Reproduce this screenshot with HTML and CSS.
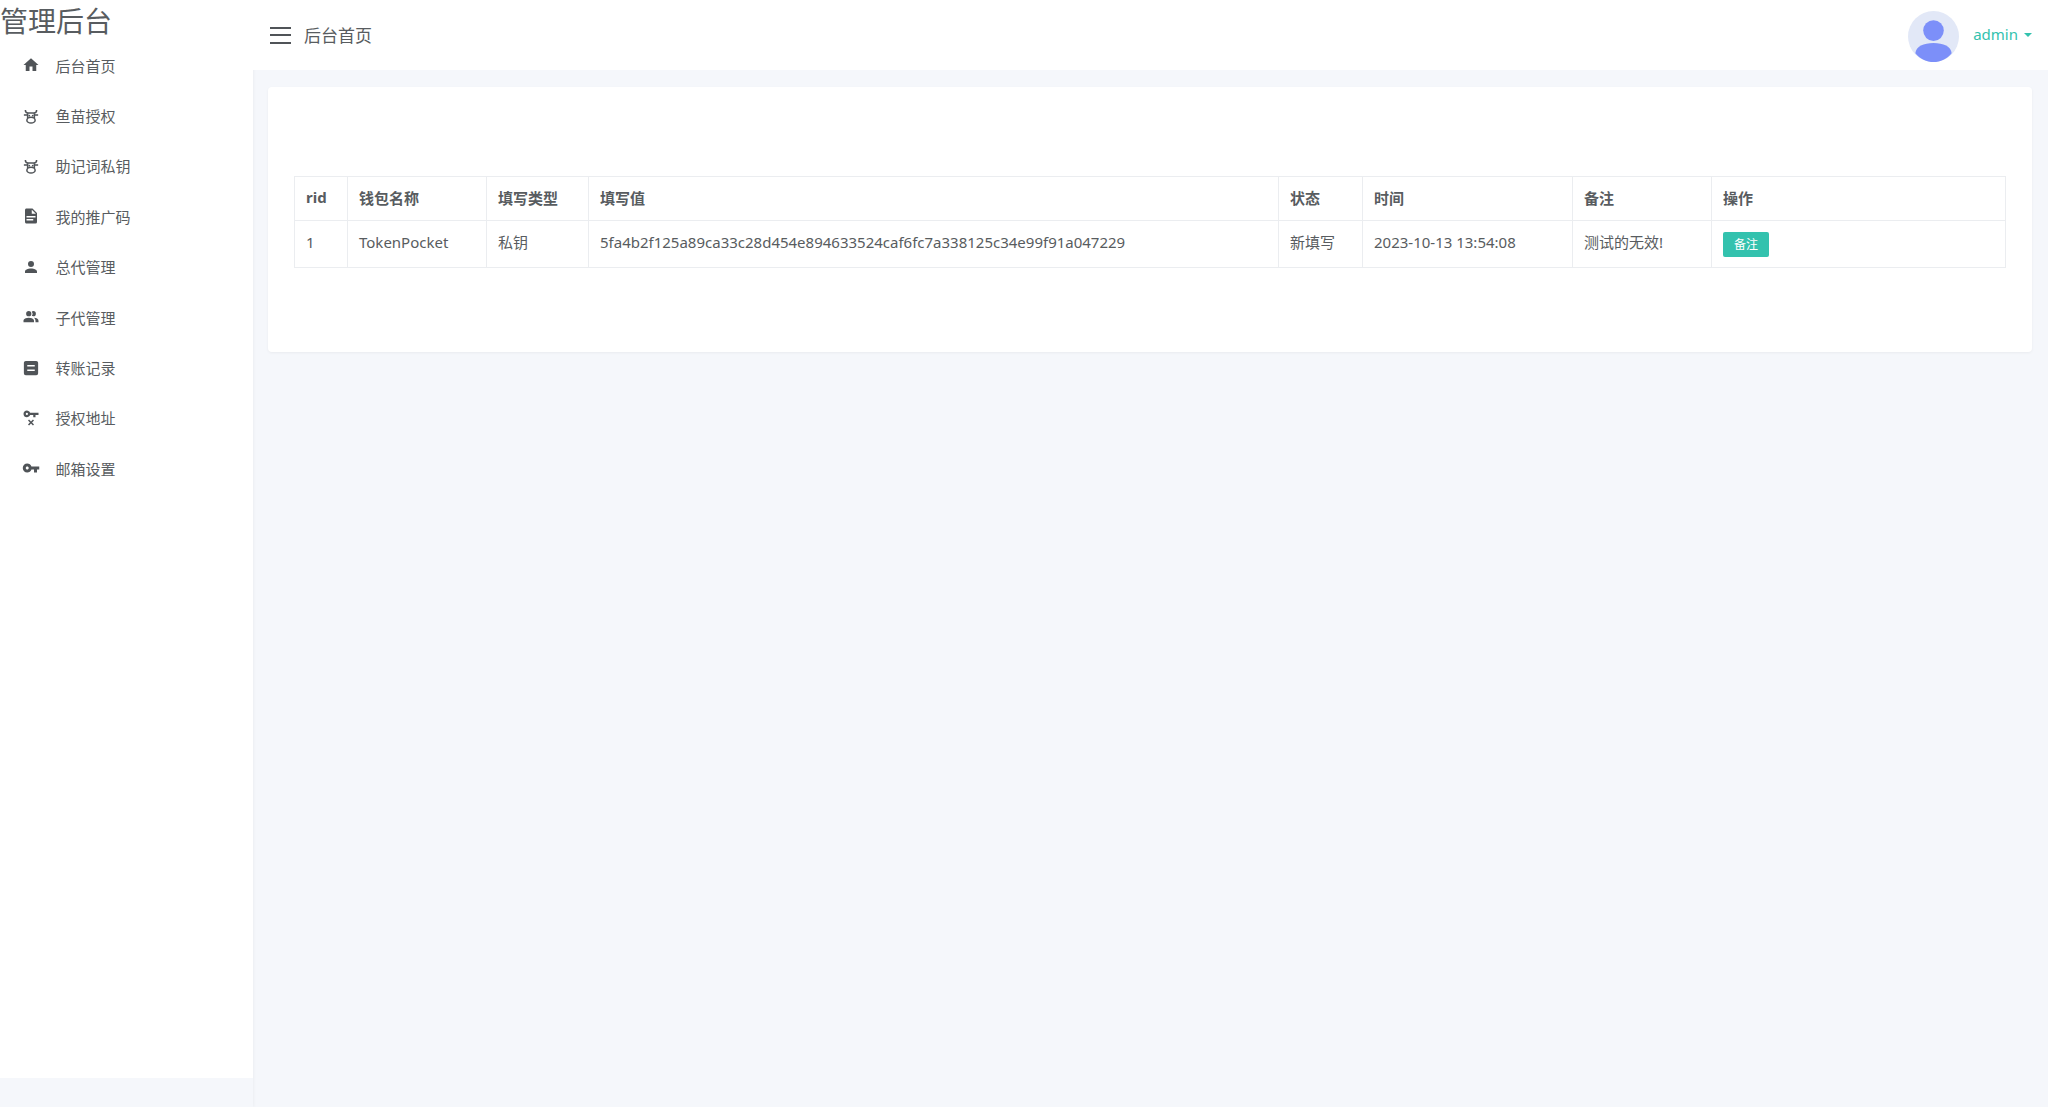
FILE: index.html
```html
<!DOCTYPE html>
<html lang="en">
<head>
    <meta charset="UTF-8">
    <title>管理后台</title>
    <link rel="stylesheet" href="styles.css">
</head>
<body>
    <div class="layout">
        <!-- sidebar -->
        <aside class="sidebar">
            <div class="sidebar-inner">
                <div class="logo">管理后台</div>
                <ul class="menu">
                    <li class="menu-item">
                        <svg class="menu-icon" viewBox="0 0 24 24"><path d="M10,20V14H14V20H19V12H22L12,3L2,12H5V20H10Z"/></svg>
                        <span>后台首页</span>
                    </li>
                    <li class="menu-item">
                        <svg class="menu-icon" viewBox="0 0 24 24"><circle cx="9.7" cy="11.5" r="1.2"/><circle cx="14.3" cy="11.5" r="1.2"/><path class="cow-line" d="M4.5 4C4.5 6.5 6 8 8 8H16C18 8 19.5 6.500 19.500 4M7.500 8V14.500M16.500 8V14.500M2.500 10.500H7.500M16.500 10.500H21.500"/><ellipse class="cow-line" cx="12" cy="17.500" rx="5.500" ry="3.800"/></svg>
                        <span>鱼苗授权</span>
                    </li>
                    <li class="menu-item">
                        <svg class="menu-icon" viewBox="0 0 24 24"><circle cx="9.7" cy="11.5" r="1.2"/><circle cx="14.3" cy="11.5" r="1.2"/><path class="cow-line" d="M4.5 4C4.5 6.5 6 8 8 8H16C18 8 19.5 6.500 19.500 4M7.500 8V14.500M16.500 8V14.500M2.500 10.500H7.500M16.500 10.500H21.500"/><ellipse class="cow-line" cx="12" cy="17.500" rx="5.500" ry="3.800"/></svg>
                        <span>助记词私钥</span>
                    </li>
                    <li class="menu-item">
                        <svg class="menu-icon" viewBox="0 0 24 24"><path d="M13,9H18.5L13,3.5V9M6,2H14L20,8V20A2,2 0 0,1 18,22H6C4.89,22 4,21.1 4,20V4C4,2.89 4.89,2 6,2M15,18V16H6V18H15M18,14V12H6V14H18Z"/></svg>
                        <span>我的推广码</span>
                    </li>
                    <li class="menu-item">
                        <svg class="menu-icon" viewBox="0 0 24 24"><path d="M12,4A4,4 0 0,1 16,8A4,4 0 0,1 12,12A4,4 0 0,1 8,8A4,4 0 0,1 12,4M12,14C16.42,14 20,15.79 20,18V20H4V18C4,15.79 7.58,14 12,14Z"/></svg>
                        <span>总代管理</span>
                    </li>
                    <li class="menu-item">
                        <svg class="menu-icon" viewBox="0 0 24 24"><path d="M16 17V19H2V17S2 13 9 13 16 17 16 17M12.5 7.5A3.5 3.5 0 1 0 9 11A3.5 3.5 0 0 0 12.5 7.5M15.94 13A5.32 5.32 0 0 1 18 17V19H22V17S22 13.37 15.94 13M15 4A3.39 3.39 0 0 0 13.07 4.59A5 5 0 0 1 13.07 10.41A3.39 3.39 0 0 0 15 11A3.5 3.5 0 0 0 15 4Z"/></svg>
                        <span>子代管理</span>
                    </li>
                    <li class="menu-item">
                        <svg class="menu-icon" viewBox="0 0 24 24"><path fill-rule="evenodd" d="M19,2.500H5C3.620,2.500 2.500,3.620 2.500,5V19A2.500,2.500 0 0,0 5,21.500H19A2.500,2.500 0 0,0 21.500,19V5C21.500,3.620 20.380,2.500 19,2.500M17,10H7V8H17V10M17,16H7V14H17V16Z"/></svg>
                        <span>转账记录</span>
                    </li>
                    <li class="menu-item">
                        <svg class="menu-icon" viewBox="0 0 24 24"><path d="M6.5,2C8.46,2 10.13,3.25 10.74,5H22V8H18V11H15V8H10.74C10.13,9.75 8.46,11 6.5,11C4,11 2,9 2,6.5C2,4 4,2 6.5,2M6.5,5A1.5,1.5 0 0,0 5,6.5A1.5,1.5 0 0,0 6.5,8A1.5,1.5 0 0,0 8,6.5A1.5,1.5 0 0,0 6.5,5M14.59,14L12,16.59L9.41,14L8,15.41L10.59,18L8,20.59L9.41,22L12,19.41L14.59,22L16,20.59L13.41,18L16,15.41L14.59,14Z"/></svg>
                        <span>授权地址</span>
                    </li>
                    <li class="menu-item">
                        <svg class="menu-icon" viewBox="0 0 24 24"><path d="M7 14C5.9 14 5 13.1 5 12S5.9 10 7 10 9 10.9 9 12 8.1 14 7 14M12.6 10C11.8 7.7 9.6 6 7 6C3.7 6 1 8.7 1 12S3.7 18 7 18C9.6 18 11.8 16.3 12.6 14H16V18H20V14H23V10H12.6Z"/></svg>
                        <span>邮箱设置</span>
                    </li>
                </ul>
            </div>
        </aside>

        <div class="main">
            <!-- top bar -->
            <header class="topbar">
                <div class="topbar-left">
                    <div class="hamburger"><i></i><i></i><i></i></div>
                    <span class="page-title">后台首页</span>
                </div>
                <div class="topbar-user">
                    <svg class="avatar" viewBox="0 0 52 52">
                        <circle cx="26" cy="26" r="26" fill="#e2e8f7"/>
                        <circle cx="26" cy="20" r="10.5" fill="#7c8ff9"/>
                        <path d="M7.5 43C8 36 16 32.5 26 32.5S44 36 44.5 43C40 48.5 33 52 26 52S12 48.5 7.5 43Z" fill="#7c8ff9"/>
                    </svg>
                    <span class="user-name">admin</span>
                    <span class="caret"></span>
                </div>
            </header>

            <div class="content">
                <div class="card">
                    <table class="data-table">
                        <thead>
                            <tr>
                                <th class="col-rid">rid</th>
                                <th class="col-wallet">钱包名称</th>
                                <th class="col-type">填写类型</th>
                                <th class="col-value">填写值</th>
                                <th class="col-status">状态</th>
                                <th class="col-time">时间</th>
                                <th class="col-note">备注</th>
                                <th>操作</th>
                            </tr>
                        </thead>
                        <tbody>
                            <tr>
                                <td>1</td>
                                <td>TokenPocket</td>
                                <td>私钥</td>
                                <td>5fa4b2f125a89ca33c28d454e894633524caf6fc7a338125c34e99f91a047229</td>
                                <td>新填写</td>
                                <td>2023-10-13 13:54:08</td>
                                <td>测试的无效!</td>
                                <td class="cell-action"><button class="btn-note">备注</button></td>
                            </tr>
                        </tbody>
                    </table>
                </div>
            </div>
        </div>
    </div>
</body>
</html>
```

FILE: styles.css
```css
* {
    margin: 0;
    padding: 0;
    box-sizing: border-box;
}

body {
    background-color: #f5f7fb;
    color: #585c60;
    font-family: 'Noto Sans', 'Noto Sans CJK SC', sans-serif;
    font-size: 15px;
    height: 1107px;
    overflow: hidden;
}

.layout {
    display: flex;
    height: 100%;
}

/* Sidebar */
.sidebar {
    width: 253px;
    flex-shrink: 0;
    box-shadow: 1px 0 3px rgba(0, 0, 0, 0.04);
}

.sidebar-inner {
    height: 1078px;
    background-color: #ffffff;
}

.logo {
    font-size: 28px;
    line-height: 42px;
}

.menu {
    list-style: none;
    margin-top: -2px;
}

.menu-item {
    display: flex;
    align-items: center;
    height: 50.4px;
    padding-left: 22px;
}

.menu-icon {
    width: 18px;
    height: 18px;
    margin-right: 15.5px;
    fill: #505458;
    flex-shrink: 0;
}

.cow-line {
    fill: none;
    stroke: #505458;
    stroke-width: 2;
}

/* Top bar */
.main {
    flex: 1;
    min-width: 0;
}

.topbar {
    height: 70px;
    background-color: #ffffff;
    display: flex;
    align-items: center;
    justify-content: space-between;
    padding: 0 16px 0 17px;
}

.topbar-left {
    display: flex;
    align-items: center;
}

.hamburger {
    width: 21px;
    margin-right: 13px;
}

.hamburger i {
    display: block;
    height: 2px;
    background-color: #505458;
    margin: 5.5px 0;
}

.page-title {
    font-size: 17px;
    margin-bottom: 2px;
}

.topbar-user {
    display: flex;
    align-items: center;
}

.avatar {
    width: 51px;
    height: 51px;
    margin-right: 14px;
    margin-top: 2px;
}

.user-name {
    color: #33c2ae;
    font-size: 15px;
    margin-bottom: 2px;
}

.caret {
    width: 0;
    height: 0;
    margin-left: 6px;
    border-left: 4px solid transparent;
    border-right: 4px solid transparent;
    border-top: 4px solid #33c2ae;
}

/* Content */
.content {
    padding: 17px 16px 0 15px;
}

.card {
    height: 265px;
    background-color: #ffffff;
    border-radius: 4px;
    box-shadow: 0 1px 3px rgba(0, 0, 0, 0.05);
    padding: 89px 26px 0 26px;
}

.data-table {
    width: 100%;
    border-collapse: collapse;
    table-layout: fixed;
}

.data-table th,
.data-table td {
    border: 1px solid #ebedf0;
    padding: 0 11px 3px;
    text-align: left;
    white-space: nowrap;
}

.data-table th {
    height: 44px;
    font-weight: 700;
}

.data-table td {
    height: 47px;
    padding-bottom: 5px;
}

.data-table td.cell-action {
    padding-bottom: 0;
}

.col-rid { width: 53px; }
.col-wallet { width: 139px; }
.col-type { width: 102px; }
.col-value { width: 690px; }
.col-status { width: 84px; }
.col-time { width: 210px; }
.col-note { width: 139px; }

.btn-note {
    display: block;
    width: 46px;
    height: 25px;
    border: none;
    border-radius: 2px;
    background-color: #33c2ae;
    color: #ffffff;
    font-family: inherit;
    font-size: 12px;
}
```
